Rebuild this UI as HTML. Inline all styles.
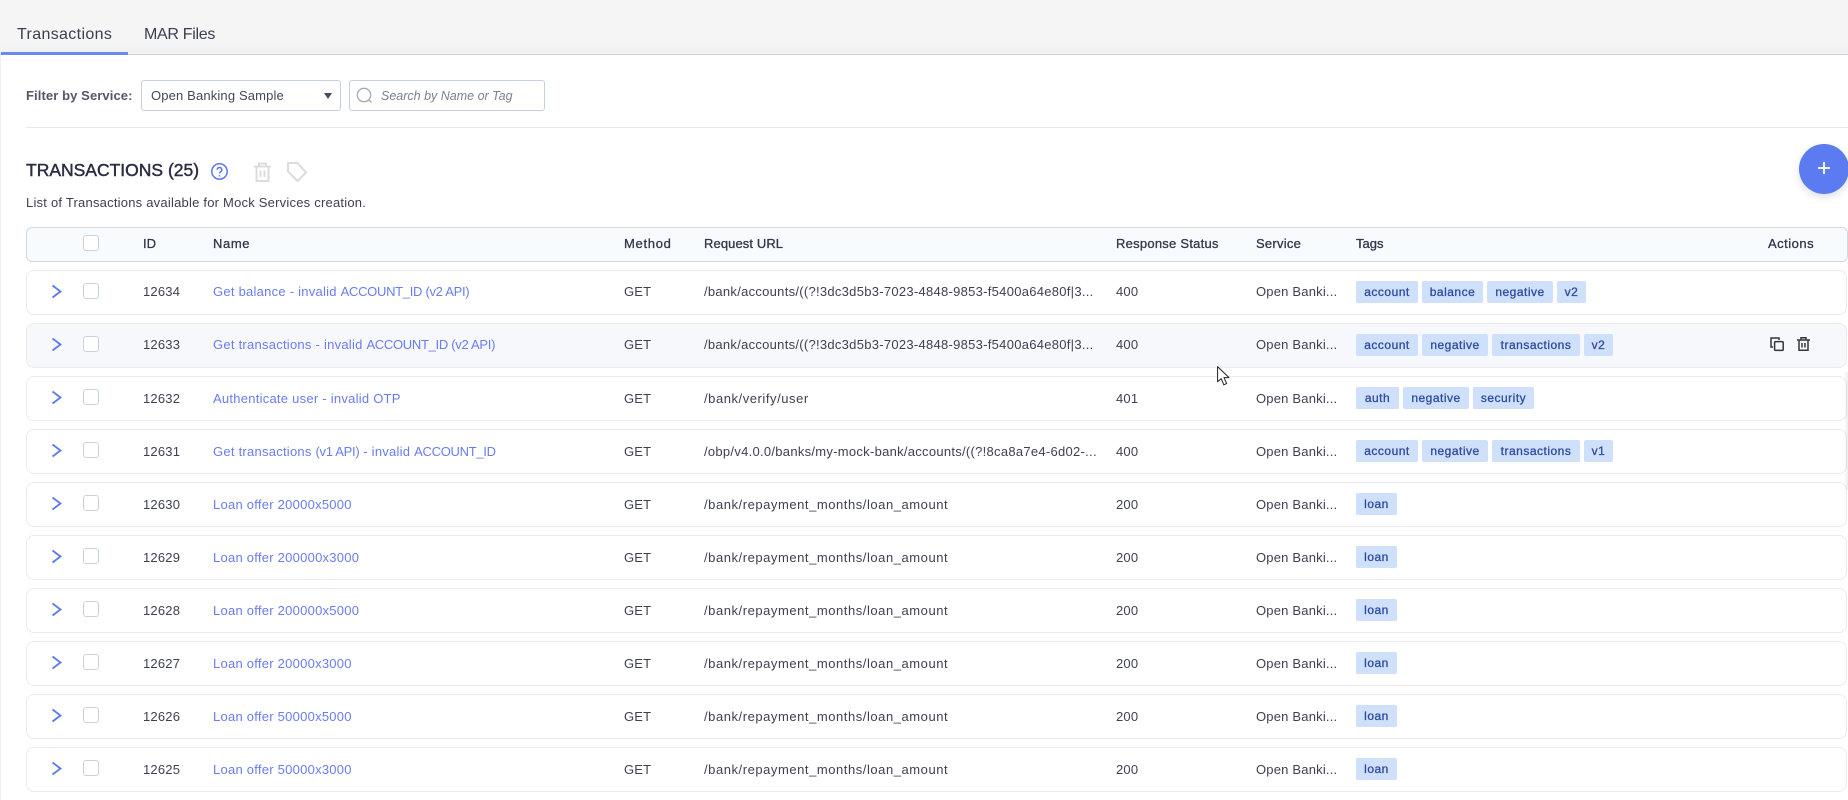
<!DOCTYPE html>
<html lang="en"><head><meta charset="utf-8"><title>Transactions</title>
<style>
*{box-sizing:border-box}
html,body{margin:0;padding:0;width:1848px;height:800px;overflow:hidden;background:#fff;font-family:"Liberation Sans",sans-serif;font-size:13px;color:#3f4152}
.a{position:absolute;white-space:nowrap}
#top{position:absolute;left:0;top:0;width:1848px;height:54px;background:linear-gradient(#f5f5f5 70%,#eff1f2)}
#line{position:absolute;left:0;top:54px;width:1848px;height:1px;background:#cdd3db}
#ul{position:absolute;left:1px;top:52px;width:127px;height:3px;background:#6b8aee}
#strip{position:absolute;left:0;top:55px;width:1px;height:745px;background:#eef2f7}
.tab{font-size:16px;letter-spacing:.35px;color:#3b3d50;top:26px;line-height:18px}
.box{position:absolute;background:#fff;border:1px solid #c6d0e2;border-radius:3px}
.row{position:absolute;left:26px;width:1821px;height:45px;border:1px solid #ebebed;border-radius:8px;background:#fff}
.t{position:absolute;white-space:nowrap;line-height:16px;letter-spacing:.2px;color:#3f4152}
.n{color:#6a7cf0;left:213px;letter-spacing:.25px}
.n span{letter-spacing:-.3px}
.u{letter-spacing:.55px}
.v{letter-spacing:.28px}
.h{position:absolute;white-space:nowrap;line-height:16px;font-size:13px;color:#33354a;-webkit-text-stroke:.3px #33354a;top:236px}
.cb{position:absolute;left:83px;width:16px;height:16px;background:#fff;border:1px solid #c9d1e3;border-radius:3px}
.tag{position:absolute;height:22px;line-height:22px;background:#cfe0fb;border-radius:2px;color:#2f4b9e;font-size:12px;-webkit-text-stroke:.3px #2f4b9e;text-align:center;letter-spacing:.5px}
svg{position:absolute;overflow:visible}
</style></head><body>
<div id="top"></div><div id="line"></div><div id="strip"></div><div id="ul"></div>
<div class="a tab" style="left:17px">Transactions</div>
<div class="a tab" style="left:144px;letter-spacing:-.3px">MAR Files</div>

<div class="a" style="left:26px;top:88px;font-weight:bold;color:#555767;line-height:16px;letter-spacing:.1px">Filter by Service:</div>
<div class="box" style="left:141px;top:80px;width:200px;height:31px"></div>
<div class="a" style="left:151px;top:88px;line-height:16px;letter-spacing:.15px;color:#454757">Open Banking Sample</div>
<svg style="left:324px;top:93px" width="8" height="6"><path d="M0 0H8L4 6Z" fill="#4a4c5e"/></svg>
<div class="box" style="left:349px;top:80px;width:196px;height:31px"></div>
<svg style="left:356px;top:87px" width="17" height="17" fill="none" stroke="#a3a9b5" stroke-width="1.3"><circle cx="8" cy="8" r="6.7"/><path d="M13 13l2.5 2.5"/></svg>
<div class="a" style="left:381px;top:88px;line-height:16px;font-size:12.5px;font-style:italic;color:#7d8090">Search by Name or Tag</div>
<div class="a" style="left:26px;top:127px;width:1822px;height:1px;background:#e5e7ea"></div>

<div class="a" style="left:26px;top:159px;font-size:17.5px;line-height:22px;color:#2a2c44;-webkit-text-stroke:.45px #2a2c44">TRANSACTIONS (25)</div>
<svg style="left:211px;top:163px" width="18" height="18" fill="none" stroke="#5c78ef" stroke-width="1.5"><circle cx="8.5" cy="8.5" r="7.7"/><path d="M6.2 6.8a2.3 2.3 0 1 1 3.4 2c-.8.5-1.1.9-1.1 1.7"/><path d="M8.5 12.2v1.3"/></svg>
<svg style="left:253px;top:162px" width="19" height="20" fill="none" stroke="#dcdcdc" stroke-width="2"><path d="M1 4.5H18M6 4.5V1.5H13V4.5M3.5 4.5V19H15.5V4.5M7.5 8.5V15M11.5 8.5V15"/></svg>
<svg style="left:287px;top:162px" width="20" height="20" fill="none" stroke="#dcdcdc" stroke-width="2"><path d="M1 1H10.5L19 10.5L10.5 19L1 9.5Z" stroke-linejoin="round"/></svg>
<div class="a" style="left:26px;top:195px;line-height:16px;letter-spacing:.22px;color:#3d3f50">List of Transactions available for Mock Services creation.</div>

<div class="a" style="left:1799px;top:144px;width:50px;height:50px;border-radius:50%;background:#5b7bf0;box-shadow:0 3px 8px rgba(60,70,110,.16)"></div>
<svg style="left:1818px;top:162px" width="12" height="12" stroke="#fff" stroke-width="1.8"><path d="M6 0V12M0 6H12"/></svg>

<div class="a" style="left:26px;top:227px;width:1822px;height:35px;background:#f8fbfe;border:1px solid #d3d7dd;border-radius:6px"></div>
<div class="cb" style="top:235px"></div>
<div class="h" style="left:143px">ID</div>
<div class="h" style="left:213px;letter-spacing:.6px">Name</div>
<div class="h" style="left:624px;letter-spacing:.7px">Method</div>
<div class="h" style="left:704px;letter-spacing:.1px">Request URL</div>
<div class="h" style="left:1116px;letter-spacing:.25px">Response Status</div>
<div class="h" style="left:1256px;letter-spacing:.25px">Service</div>
<div class="h" style="left:1356px">Tags</div>
<div class="h" style="left:1768px;letter-spacing:.5px">Actions</div>

<!-- row 1 -->
<div class="row" style="top:270px"></div>
<svg style="left:52px;top:285px" width="10" height="13" fill="none" stroke="#5c78ef" stroke-width="1.8"><path d="M.5 .5L8.5 6.5L.5 12.5"/></svg>
<div class="cb" style="top:283px"></div>
<div class="t" style="left:143px;top:284px">12634</div>
<div class="t n" style="top:284px">Get balance - invalid <span>ACCOUNT_ID (v2 API)</span></div>
<div class="t" style="left:624px;top:284px">GET</div>
<div class="t v" style="left:704px;top:284px">/bank/accounts/((?!3dc3d5b3-7023-4848-9853-f5400a64e80f|3...</div>
<div class="t" style="left:1116px;top:284px">400</div>
<div class="t" style="left:1256px;top:284px">Open Banki...</div>
<div class="tag" style="left:1356px;top:281px;width:62px">account</div>
<div class="tag" style="left:1422px;top:281px;width:61px">balance</div>
<div class="tag" style="left:1487px;top:281px;width:66px">negative</div>
<div class="tag" style="left:1557px;top:281px;width:29px">v2</div>

<!-- row 2 -->
<div class="row" style="top:323px;background:#f7f8fc"></div>
<svg style="left:52px;top:338px" width="10" height="13" fill="none" stroke="#5c78ef" stroke-width="1.8"><path d="M.5 .5L8.5 6.5L.5 12.5"/></svg>
<div class="cb" style="top:336px"></div>
<div class="t" style="left:143px;top:337px">12633</div>
<div class="t n" style="top:337px">Get transactions - invalid <span>ACCOUNT_ID (v2 API)</span></div>
<div class="t" style="left:624px;top:337px">GET</div>
<div class="t v" style="left:704px;top:337px">/bank/accounts/((?!3dc3d5b3-7023-4848-9853-f5400a64e80f|3...</div>
<div class="t" style="left:1116px;top:337px">400</div>
<div class="t" style="left:1256px;top:337px">Open Banki...</div>
<div class="tag" style="left:1356px;top:334px;width:62px">account</div>
<div class="tag" style="left:1422px;top:334px;width:66px">negative</div>
<div class="tag" style="left:1492px;top:334px;width:88px">transactions</div>
<div class="tag" style="left:1584px;top:334px;width:29px">v2</div>
<svg style="left:1770px;top:337px" width="14" height="14" fill="none" stroke="#33353f" stroke-width="1.5"><path d="M3 10H1V1H9V3"/><rect x="4.6" y="4.6" width="8.6" height="8.8" rx="1"/></svg>
<svg style="left:1797px;top:337px" width="13" height="14" fill="none" stroke="#33353f" stroke-width="1.5"><path d="M0 3H13M4 3V.7H9V3M2 3V13.3H11V3M5 6V10.5M8 6V10.5"/></svg>

<!-- row 3 -->
<div class="row" style="top:376px"></div>
<svg style="left:52px;top:391px" width="10" height="13" fill="none" stroke="#5c78ef" stroke-width="1.8"><path d="M.5 .5L8.5 6.5L.5 12.5"/></svg>
<div class="cb" style="top:389px"></div>
<div class="t" style="left:143px;top:391px">12632</div>
<div class="t n" style="top:391px">Authenticate user - invalid OTP</div>
<div class="t" style="left:624px;top:391px">GET</div>
<div class="t u" style="left:704px;top:391px">/bank/verify/user</div>
<div class="t" style="left:1116px;top:391px">401</div>
<div class="t" style="left:1256px;top:391px">Open Banki...</div>
<div class="tag" style="left:1356px;top:387px;width:43px">auth</div>
<div class="tag" style="left:1403px;top:387px;width:66px">negative</div>
<div class="tag" style="left:1473px;top:387px;width:61px">security</div>

<!-- row 4 -->
<div class="row" style="top:429px"></div>
<svg style="left:52px;top:444px" width="10" height="13" fill="none" stroke="#5c78ef" stroke-width="1.8"><path d="M.5 .5L8.5 6.5L.5 12.5"/></svg>
<div class="cb" style="top:442px"></div>
<div class="t" style="left:143px;top:444px">12631</div>
<div class="t n" style="top:444px">Get transactions <span>(v1 API)</span> - invalid <span>ACCOUNT_ID</span></div>
<div class="t" style="left:624px;top:444px">GET</div>
<div class="t v" style="left:704px;top:444px">/obp/v4.0.0/banks/my-mock-bank/accounts/((?!8ca8a7e4-6d02-...</div>
<div class="t" style="left:1116px;top:444px">400</div>
<div class="t" style="left:1256px;top:444px">Open Banki...</div>
<div class="tag" style="left:1356px;top:440px;width:62px">account</div>
<div class="tag" style="left:1422px;top:440px;width:66px">negative</div>
<div class="tag" style="left:1492px;top:440px;width:88px">transactions</div>
<div class="tag" style="left:1584px;top:440px;width:29px">v1</div>

<!-- row 5 -->
<div class="row" style="top:482px"></div>
<svg style="left:52px;top:497px" width="10" height="13" fill="none" stroke="#5c78ef" stroke-width="1.8"><path d="M.5 .5L8.5 6.5L.5 12.5"/></svg>
<div class="cb" style="top:495px"></div>
<div class="t" style="left:143px;top:497px">12630</div>
<div class="t n" style="top:497px">Loan offer 20000x5000</div>
<div class="t" style="left:624px;top:497px">GET</div>
<div class="t u" style="left:704px;top:497px">/bank/repayment_months/loan_amount</div>
<div class="t" style="left:1116px;top:497px">200</div>
<div class="t" style="left:1256px;top:497px">Open Banki...</div>
<div class="tag" style="left:1356px;top:493px;width:41px">loan</div>

<!-- row 6 -->
<div class="row" style="top:535px"></div>
<svg style="left:52px;top:550px" width="10" height="13" fill="none" stroke="#5c78ef" stroke-width="1.8"><path d="M.5 .5L8.5 6.5L.5 12.5"/></svg>
<div class="cb" style="top:548px"></div>
<div class="t" style="left:143px;top:550px">12629</div>
<div class="t n" style="top:550px">Loan offer 200000x3000</div>
<div class="t" style="left:624px;top:550px">GET</div>
<div class="t u" style="left:704px;top:550px">/bank/repayment_months/loan_amount</div>
<div class="t" style="left:1116px;top:550px">200</div>
<div class="t" style="left:1256px;top:550px">Open Banki...</div>
<div class="tag" style="left:1356px;top:546px;width:41px">loan</div>

<!-- row 7 -->
<div class="row" style="top:588px"></div>
<svg style="left:52px;top:603px" width="10" height="13" fill="none" stroke="#5c78ef" stroke-width="1.8"><path d="M.5 .5L8.5 6.5L.5 12.5"/></svg>
<div class="cb" style="top:601px"></div>
<div class="t" style="left:143px;top:603px">12628</div>
<div class="t n" style="top:603px">Loan offer 200000x5000</div>
<div class="t" style="left:624px;top:603px">GET</div>
<div class="t u" style="left:704px;top:603px">/bank/repayment_months/loan_amount</div>
<div class="t" style="left:1116px;top:603px">200</div>
<div class="t" style="left:1256px;top:603px">Open Banki...</div>
<div class="tag" style="left:1356px;top:599px;width:41px">loan</div>

<!-- row 8 -->
<div class="row" style="top:641px"></div>
<svg style="left:52px;top:656px" width="10" height="13" fill="none" stroke="#5c78ef" stroke-width="1.8"><path d="M.5 .5L8.5 6.5L.5 12.5"/></svg>
<div class="cb" style="top:654px"></div>
<div class="t" style="left:143px;top:656px">12627</div>
<div class="t n" style="top:656px">Loan offer 20000x3000</div>
<div class="t" style="left:624px;top:656px">GET</div>
<div class="t u" style="left:704px;top:656px">/bank/repayment_months/loan_amount</div>
<div class="t" style="left:1116px;top:656px">200</div>
<div class="t" style="left:1256px;top:656px">Open Banki...</div>
<div class="tag" style="left:1356px;top:652px;width:41px">loan</div>

<!-- row 9 -->
<div class="row" style="top:694px"></div>
<svg style="left:52px;top:709px" width="10" height="13" fill="none" stroke="#5c78ef" stroke-width="1.8"><path d="M.5 .5L8.5 6.5L.5 12.5"/></svg>
<div class="cb" style="top:707px"></div>
<div class="t" style="left:143px;top:709px">12626</div>
<div class="t n" style="top:709px">Loan offer 50000x5000</div>
<div class="t" style="left:624px;top:709px">GET</div>
<div class="t u" style="left:704px;top:709px">/bank/repayment_months/loan_amount</div>
<div class="t" style="left:1116px;top:709px">200</div>
<div class="t" style="left:1256px;top:709px">Open Banki...</div>
<div class="tag" style="left:1356px;top:705px;width:41px">loan</div>

<!-- row 10 -->
<div class="row" style="top:747px"></div>
<svg style="left:52px;top:762px" width="10" height="13" fill="none" stroke="#5c78ef" stroke-width="1.8"><path d="M.5 .5L8.5 6.5L.5 12.5"/></svg>
<div class="cb" style="top:760px"></div>
<div class="t" style="left:143px;top:762px">12625</div>
<div class="t n" style="top:762px">Loan offer 50000x3000</div>
<div class="t" style="left:624px;top:762px">GET</div>
<div class="t u" style="left:704px;top:762px">/bank/repayment_months/loan_amount</div>
<div class="t" style="left:1116px;top:762px">200</div>
<div class="t" style="left:1256px;top:762px">Open Banki...</div>
<div class="tag" style="left:1356px;top:758px;width:41px">loan</div>

<div class="a" style="left:1844px;top:372px;width:4px;height:118px;background:linear-gradient(90deg,rgba(0,0,0,0),rgba(0,0,0,.07))"></div>
<svg style="left:1217px;top:366px" width="13" height="20"><path d="M.6.6V15.8L4.2 12.6L6.8 18.8L9.6 17.6L7 11.6H12Z" fill="#fff" stroke="#222" stroke-width="1" stroke-linejoin="round"/></svg>
</body></html>
